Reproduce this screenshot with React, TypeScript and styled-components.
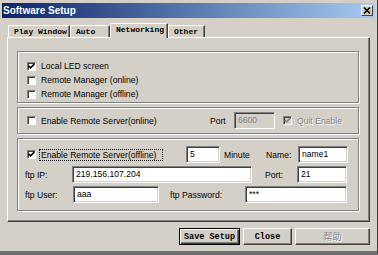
import React from 'react';
import styled, { createGlobalStyle } from 'styled-components';

const UI = `"Liberation Sans", Arial, sans-serif`;
const MONO = `"Liberation Mono", "Courier New", monospace`;

const Global = createGlobalStyle`
  html, body { margin: 0; padding: 0; background: #d4d0c8; }
  body { width: 378px; height: 255px; overflow: hidden; }
  * { box-sizing: border-box; }
`;

const Window = styled.div`
  width: 378px;
  height: 255px;
  background: #d4d0c8;
  padding: 3px 2px 0 2px;
  border-right: 1px solid #404040;
  border-bottom: 4px solid #6e6e6e;
  display: flex;
  flex-direction: column;
  font-family: ${UI};
  font-size: 8.6px;
  color: #000;
`;

const TitleBar = styled.div`
  height: 15px;
  display: flex;
  align-items: center;
  padding-left: 1px;
  background: linear-gradient(to right, #0a246a, #a6caf0);
`;

const Title = styled.span`
  color: #fff;
  font-weight: bold;
  font-size: 10px;
  font-family: ${UI};
`;

const CloseBox = styled.span`
  margin-left: auto;
  margin-right: 2px;
  width: 12px;
  height: 11px;
  background: #d4d0c8;
  border-top: 1px solid #fff;
  border-left: 1px solid #fff;
  border-right: 1px solid #404040;
  border-bottom: 1px solid #404040;
  display: flex;
  align-items: center;
  justify-content: center;
`;

const Body = styled.div`
  padding: 0 5px;
  display: flex;
  flex-direction: column;
`;

const TabStrip = styled.div`
  margin-top: 5px;
  height: 14px;
  display: flex;
  align-items: flex-end;
  padding-left: 1px;
  position: relative;
  z-index: 1;
`;

const Tab = styled.div<{ $w: number; $active?: boolean }>`
  width: ${(p) => p.$w}px;
  height: ${(p) => (p.$active ? 15 : 12)}px;
  margin-bottom: ${(p) => (p.$active ? -1 : 0)}px;
  padding-left: 5px;
  background: #d4d0c8;
  border-top: 1px solid #fff;
  border-left: 1px solid #fff;
  border-right: 1px solid #404040;
  box-shadow: inset -1px 0 #808080;
  font-family: ${MONO};
  font-weight: bold;
  font-size: 8px;
  line-height: ${(p) => (p.$active ? 12 : 11)}px;
  white-space: nowrap;
  overflow: hidden;
`;

const Panel = styled.div`
  height: 185px;
  border-top: 1px solid #fff;
  border-left: 1px solid #fff;
  border-right: 1px solid #404040;
  border-bottom: 1px solid #404040;
  box-shadow: inset -1px -1px #808080;
  padding: 13px 10px 0 9px;
  display: flex;
  flex-direction: column;
  gap: 4px;
`;

const Group = styled.div<{ $h: number; $pt?: number }>`
  height: ${(p) => p.$h}px;
  border: 1px solid #808080;
  box-shadow: inset 1px 1px #fff, 1px 1px #fff;
  padding: ${(p) => p.$pt ?? 0}px 0 0 9px;
  display: flex;
  flex-direction: column;
`;

const CheckRow = styled.div<{ $h?: number }>`
  height: ${(p) => p.$h ?? 14}px;
  display: flex;
  align-items: center;
  white-space: nowrap;
`;

const Box = styled.span<{ $disabled?: boolean; $ml?: number }>`
  flex: none;
  width: 9px;
  height: 9px;
  margin-left: ${(p) => p.$ml ?? 0}px;
  margin-right: 5px;
  background: ${(p) => (p.$disabled ? '#d4d0c8' : '#fff')};
  border-top: 1px solid #808080;
  border-left: 1px solid #808080;
  border-bottom: 1px solid #fff;
  border-right: 1px solid #fff;
  box-shadow: inset 1px 1px #404040;
  display: flex;
  align-items: center;
  justify-content: center;
`;

const Label = styled.span<{ $w?: number; $ml?: number; $disabled?: boolean }>`
  flex: none;
  width: ${(p) => (p.$w ? `${p.$w}px` : 'auto')};
  margin-left: ${(p) => p.$ml ?? 0}px;
  color: ${(p) => (p.$disabled ? '#808080' : '#000')};
  text-shadow: ${(p) => (p.$disabled ? '1px 1px #fff' : 'none')};
  white-space: nowrap;
`;

const FocusLabel = styled.span`
  flex: none;
  width: 124px;
  margin-left: -2px;
  padding-left: 1px;
  border: 1px dotted #000;
  line-height: 10px;
  white-space: nowrap;
  overflow: hidden;
`;

const Field = styled.div<{ $w: number; $ml?: number; $disabled?: boolean }>`
  flex: none;
  width: ${(p) => p.$w}px;
  height: 17px;
  margin-left: ${(p) => p.$ml ?? 0}px;
  background: ${(p) => (p.$disabled ? '#d4d0c8' : '#fff')};
  color: ${(p) => (p.$disabled ? '#808080' : '#000')};
  border-top: 1px solid #808080;
  border-left: 1px solid #808080;
  border-bottom: 1px solid #fff;
  border-right: 1px solid #fff;
  box-shadow: inset 1px 1px #404040, inset -1px -1px #d4d0c8;
  padding: 1px 0 0 3px;
  line-height: 13px;
  white-space: nowrap;
  overflow: hidden;
`;

const FormRows = styled.div`
  display: flex;
  flex-direction: column;
  gap: 3px;
`;

const FormRow = styled.div<{ $indent?: number }>`
  height: 17px;
  display: flex;
  align-items: center;
  margin-left: ${(p) => p.$indent ?? 0}px;
`;

const ButtonRow = styled.div`
  margin-top: 6px;
  display: flex;
  justify-content: flex-end;
  gap: 3px;
`;

const Button = styled.div<{ $w: number; $default?: boolean; $disabled?: boolean }>`
  width: ${(p) => p.$w}px;
  height: 17px;
  background: #d4d0c8;
  display: flex;
  align-items: center;
  justify-content: center;
  font-family: ${(p) => (p.$disabled ? `"Noto Sans CJK SC", sans-serif` : MONO)};
  font-weight: ${(p) => (p.$disabled ? 'normal' : 'bold')};
  font-size: ${(p) => (p.$disabled ? 9 : 8.5)}px;
  color: ${(p) => (p.$disabled ? '#808080' : '#000')};
  text-shadow: ${(p) => (p.$disabled ? '1px 1px #fff' : 'none')};
  border: 1px solid;
  border-color: ${(p) => (p.$default ? '#000' : '#fff #404040 #404040 #fff')};
  box-shadow: ${(p) =>
    p.$default
      ? 'inset 1px 1px #fff, inset -1px -1px #404040, inset -2px -2px #808080'
      : 'inset -1px -1px #808080'};
`;

const CheckMark = ({ color }: { color: string }) => (
  <svg width="7" height="7" viewBox="0 0 7 7">
    <path d="M0.6 2.8 L2.6 4.8 L6.4 1" stroke={color} strokeWidth="1.7" fill="none" />
  </svg>
);

const Check = ({ checked, disabled, ml }: { checked?: boolean; disabled?: boolean; ml?: number }) => (
  <Box $disabled={disabled} $ml={ml}>
    {checked && <CheckMark color={disabled ? '#808080' : '#000'} />}
  </Box>
);

export default function App() {
  return (
    <>
      <Global />
      <Window>
        <TitleBar>
          <Title>Software Setup</Title>
          <CloseBox>
            <svg width="8" height="7" viewBox="0 0 8 7">
              <path d="M1 0.5 L7 6.5 M7 0.5 L1 6.5" stroke="#000" strokeWidth="1.6" />
            </svg>
          </CloseBox>
        </TitleBar>
        <Body>
          <TabStrip>
            <Tab $w={62}>Play Window</Tab>
            <Tab $w={40}>Auto</Tab>
            <Tab $w={58} $active>
              Networking
            </Tab>
            <Tab $w={37}>Other</Tab>
          </TabStrip>
          <Panel>
            <Group $h={52} $pt={7}>
              <CheckRow>
                <Check checked />
                <Label>Local LED screen</Label>
              </CheckRow>
              <CheckRow>
                <Check />
                <Label>Remote Manager (online)</Label>
              </CheckRow>
              <CheckRow>
                <Check />
                <Label>Remote Manager (offline)</Label>
              </CheckRow>
            </Group>
            <Group $h={27} $pt={4}>
              <CheckRow $h={17}>
                <Check />
                <Label $w={169}>Enable Remote Server(online)</Label>
                <Label $w={24}>Port</Label>
                <Field $w={41} $disabled>
                  6600
                </Field>
                <Check checked disabled ml={8} />
                <Label $disabled>Quit Enable</Label>
              </CheckRow>
            </Group>
            <Group $h={73} $pt={7}>
              <FormRows>
                <FormRow>
                  <Check checked />
                  <FocusLabel>Enable Remote Server(offline)</FocusLabel>
                  <Field $w={34} $ml={23}>
                    5
                  </Field>
                  <Label $w={42} $ml={4}>
                    Minute
                  </Label>
                  <Label $w={32}>Name:</Label>
                  <Field $w={50}>name1</Field>
                </FormRow>
                <FormRow $indent={-2}>
                  <Label $w={47}>ftp IP:</Label>
                  <Field $w={180}>219.156.107.204</Field>
                  <Label $w={32} $ml={13}>
                    Port:
                  </Label>
                  <Field $w={50}>21</Field>
                </FormRow>
                <FormRow $indent={-2}>
                  <Label $w={48}>ftp User:</Label>
                  <Field $w={86}>aaa</Field>
                  <Label $w={75} $ml={11}>
                    ftp Password:
                  </Label>
                  <Field $w={102}>***</Field>
                </FormRow>
              </FormRows>
            </Group>
          </Panel>
          <ButtonRow>
            <Button $w={61} $default>
              Save Setup
            </Button>
            <Button $w={49}>Close</Button>
            <Button $w={75} $disabled>
              帮助
            </Button>
          </ButtonRow>
        </Body>
      </Window>
    </>
  );
}
